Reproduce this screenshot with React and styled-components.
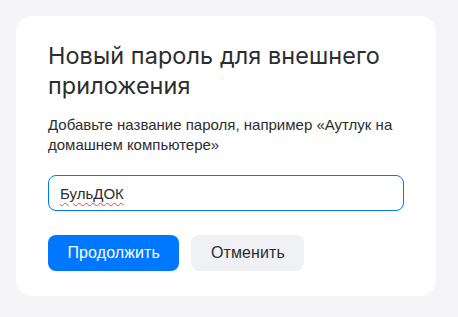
import React from "react";
import { styled, createGlobalStyle } from "styled-components";

const Global = createGlobalStyle`
  html, body {
    margin: 0;
    padding: 0;
    background: #f5f5f7;
  }
  * { box-sizing: border-box; }
`;

const Page = styled.div`
  width: 458px;
  height: 317px;
  padding: 16px;
  background: #f5f5f7;
  font-family: "Liberation Sans", Arial, sans-serif;
`;

const Card = styled.div`
  width: 420px;
  height: 280px;
  background: #fff;
  border-radius: 16px;
  padding: 25px 32px 24px 32px;
  display: flex;
  flex-direction: column;
`;

const Title = styled.h1`
  margin: 0;
  font-family: Inter, "Open Sans", sans-serif;
  font-weight: 400;
  font-size: 23.4px;
  line-height: 30px;
  color: #2c2d2e;
  letter-spacing: 0.1px;
`;

const Description = styled.p`
  margin: 14px 0 0;
  font-size: 15px;
  line-height: 20px;
  color: #2c2d2e;
`;

const Field = styled.div`
  margin-top: 20px;
  width: 356px;
  height: 36px;
  border: 1px solid #0077ff;
  border-radius: 8px;
  padding: 0 11px;
  display: flex;
  align-items: center;
  font-size: 15px;
  color: #2c2d2e;
  cursor: text;
`;

const Misspelled = styled.span`
  text-decoration: underline wavy #e64646;
  text-decoration-thickness: 1px;
  text-underline-offset: 3px;
`;

const Actions = styled.div`
  display: flex;
  gap: 12px;
  margin-top: 24px;
`;

const Button = styled.button`
  height: 36px;
  padding: 0 19.5px;
  border: none;
  border-radius: 8px;
  font-family: "Liberation Sans", Arial, sans-serif;
  font-size: 16px;
  font-weight: 400;
  letter-spacing: 0.1px;
  background: ${(p) => (p.$primary ? "#0077ff" : "#f0f1f5")};
  color: ${(p) => (p.$primary ? "#fff" : "#2c2d2e")};
  cursor: pointer;
`;

export default function App() {
  return (
    <Page>
      <Global />
      <Card>
        <Title>Новый пароль для внешнего приложения</Title>
        <Description>
          Добавьте название пароля, например «Аутлук на домашнем компьютере»
        </Description>
        <Field role="textbox">
          <Misspelled>БульДОК</Misspelled>
        </Field>
        <Actions>
          <Button $primary>Продолжить</Button>
          <Button>Отменить</Button>
        </Actions>
      </Card>
    </Page>
  );
}
